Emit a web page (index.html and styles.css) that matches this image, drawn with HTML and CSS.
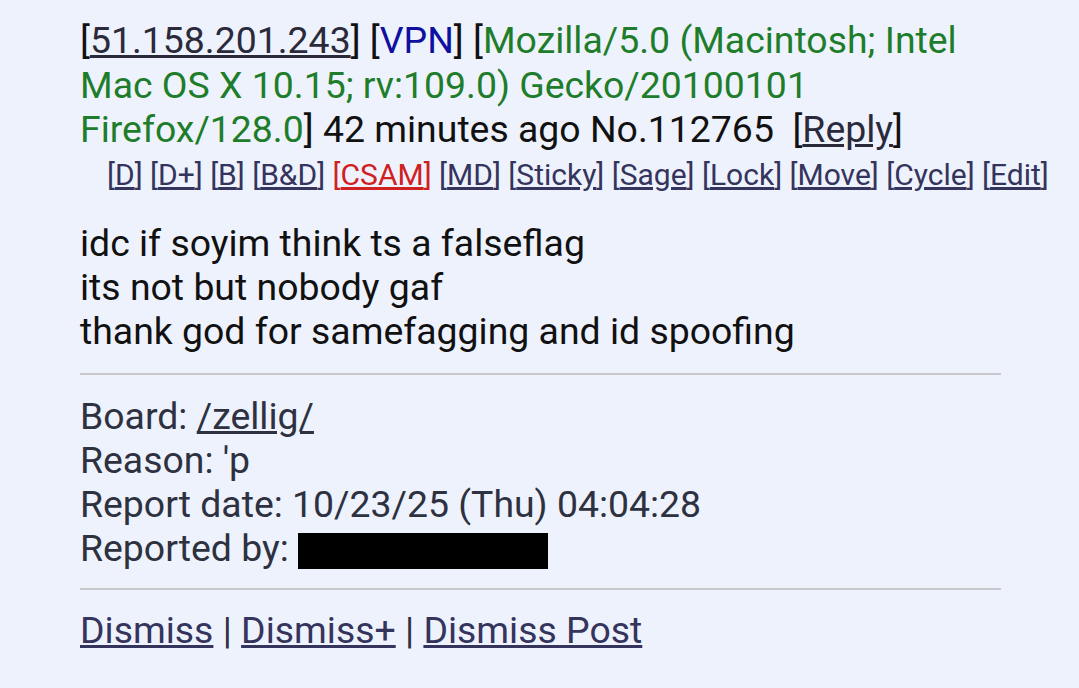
FILE: index.html
```html
<!DOCTYPE html>
<html lang="en">
<head>
    <meta charset="UTF-8">
    <meta name="viewport" content="width=device-width, initial-scale=1.0">
    <title>Report</title>
    <link rel="stylesheet" href="styles.css">
</head>
<body>
    <div class="report">
        <div class="post-info">
            [<a href="#">51.158.201.243</a>] [<span class="vpn">VPN</span>] [<span class="ua">Mozilla/5.0 (Macintosh; Intel Mac OS X 10.15; rv:109.0) Gecko/20100101 Firefox/128.0</span>] 42 minutes ago No.112765&nbsp;&nbsp;[<a href="#">Reply</a>]
        </div>
        <div class="mod-links">
            [<a href="#">D</a>] [<a href="#">D+</a>] [<a href="#">B</a>] [<a href="#">B&amp;D</a>] <span class="csam">[<a href="#">CSAM</a>]</span> [<a href="#">MD</a>] [<a href="#">Sticky</a>] [<a href="#">Sage</a>] [<a href="#">Lock</a>] [<a href="#">Move</a>] [<a href="#">Cycle</a>] [<a href="#">Edit</a>]
        </div>
        <div class="body">
            idc if soyim think ts a falseflag<br>
            its not but nobody gaf<br>
            thank god for samefagging and id spoofing
        </div>
        <hr>
        <div class="details">
            Board: <a href="#">/zellig/</a><br>
            Reason: 'p<br>
            Report date: 10/23/25 (Thu) 04:04:28<br>
            Reported by: <span class="redacted"></span>
        </div>
        <hr class="last">
        <div class="actions">
            <a href="#">Dismiss</a> | <a href="#">Dismiss+</a> | <a href="#">Dismiss Post</a>
        </div>
    </div>
</body>
</html>
```

FILE: styles.css
```css
body { margin: 0; background: #eef2fd; color: #111; font-family: Roboto, "Noto Sans", sans-serif; }
a { color: #34345c; }
.report { width: 921px; padding: 18px 0 0 80px; }
.post-info { font-size: 37.4px; line-height: 44.5px; }
.post-info a { color: #2a2a3a; }
.vpn { color: #1010a0; }
.ua { color: #1e7d2a; }
.mod-links { font-size: 30px; line-height: 34px; margin: 6px 0 0 27px; color: #34345c; white-space: nowrap; }
.mod-links a { color: #34345c; }
.csam, .csam a { color: #d02020; }
.body { font-size: 37.4px; line-height: 44px; margin-top: 29px; }
hr { border: 0; height: 2px; background: #c8c8cc; margin: 20px 0 19px; }
hr.last { margin-top: 18px; margin-bottom: 18px; }
.details { font-size: 37.4px; line-height: 44px; color: #2d3140; }
.details a { color: #2d3140; }
.redacted { display: inline-block; width: 250px; height: 36px; background: #000; vertical-align: -8px; }
.actions { font-size: 37.4px; line-height: 44px; color: #2d3140; }
.actions a { color: #34345c; }
```
